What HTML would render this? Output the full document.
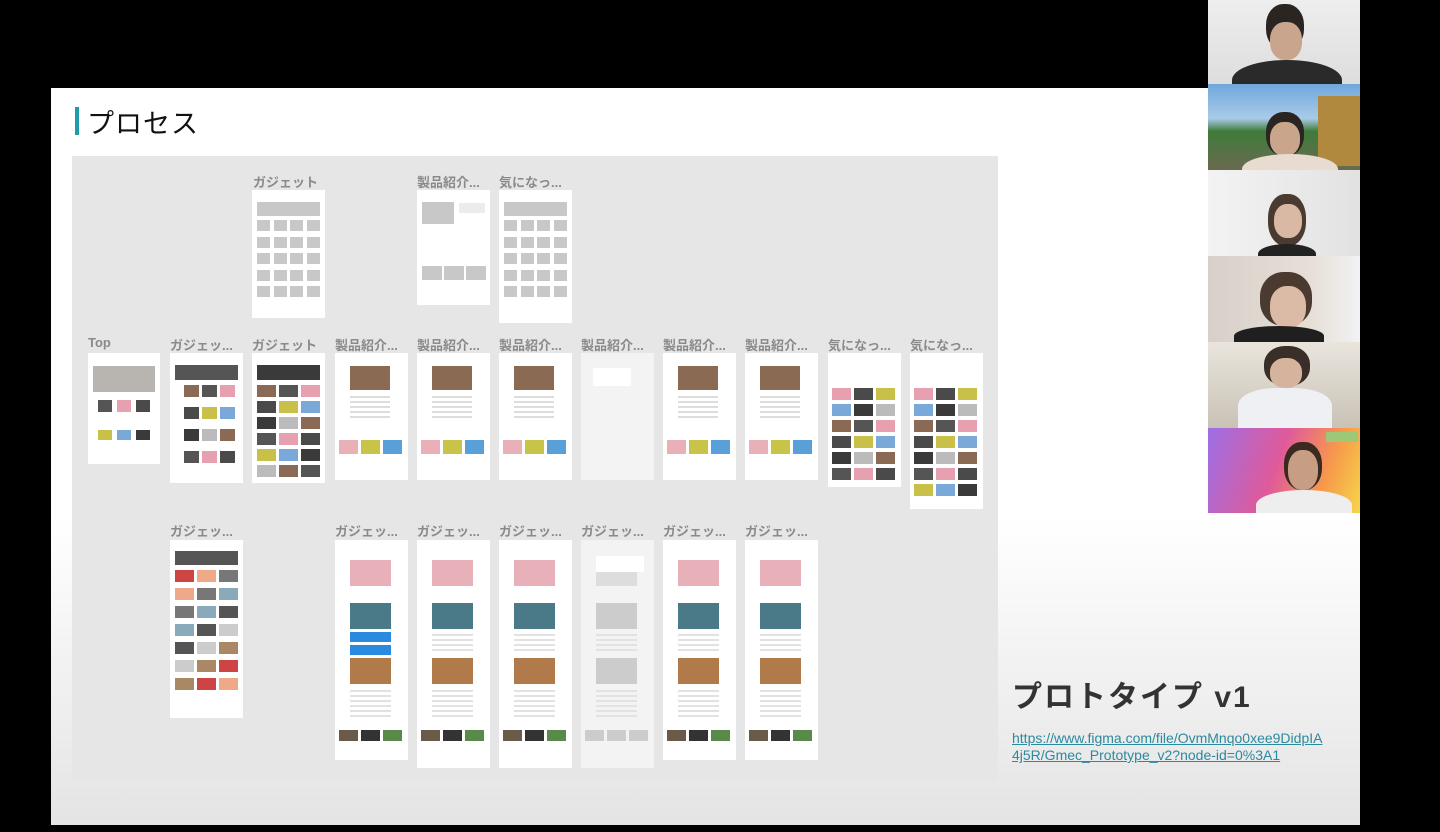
<!DOCTYPE html>
<html><head><meta charset="utf-8">
<style>
*{margin:0;padding:0;box-sizing:border-box}
body{width:1440px;height:832px;background:#000;position:relative;overflow:hidden;font-family:"Liberation Sans","Noto Sans CJK JP",sans-serif}
#slide{position:absolute;left:51px;top:88px;width:1309px;height:737px;background:linear-gradient(#fff 0px,#fff 430px,#e4e4e4 737px)}
#bar{position:absolute;left:75px;top:107px;width:4px;height:28px;background:#1f9bb0}
#title{position:absolute;left:87px;top:102px;font-size:27px;color:#111;letter-spacing:1px}
#canvas{position:absolute;left:72px;top:156px;width:926px;height:625px;background:#e6e6e6}
.lbl{position:absolute;font-size:13px;color:#8a8a8a;font-weight:bold;white-space:nowrap}
.fr{position:absolute;background:#fff;overflow:hidden}
.b{position:absolute}
.tile{position:absolute;left:1208px;width:152px;height:86px;overflow:hidden}
#pt{position:absolute;left:1012px;top:672px;font-size:30px;color:#333;letter-spacing:2px;font-weight:bold}
#link{position:absolute;left:1012px;top:730px;font-size:14px;line-height:17px;color:#2a8aa0;text-decoration:underline}
</style></head><body>
<div id="slide"></div>
<div id="bar"></div>
<div id="title">プロセス</div>
<div id="canvas"></div>
<div id="frames"></div>

<div class="tile" style="top:0;background:linear-gradient(#eee,#ddd)">
 <div class="b" style="left:58px;top:4px;width:38px;height:46px;border-radius:45%;background:#2b2522"></div>
 <div class="b" style="left:62px;top:22px;width:32px;height:38px;border-radius:45%;background:#caa58e"></div>
 <div class="b" style="left:24px;top:60px;width:110px;height:40px;border-radius:50% 50% 0 0;background:#2a2a2a"></div>
</div>
<div class="tile" style="top:84px;background:linear-gradient(#6fa7dc 0,#a9cbe8 40%,#3f7b3a 55%,#6a6a50 100%)">
 <div class="b" style="left:110px;top:12px;width:42px;height:70px;background:#b0893e"></div>
 <div class="b" style="left:58px;top:28px;width:38px;height:44px;border-radius:45%;background:#2b2522"></div>
 <div class="b" style="left:62px;top:38px;width:30px;height:34px;border-radius:45%;background:#c9a58c"></div>
 <div class="b" style="left:34px;top:70px;width:96px;height:30px;border-radius:50% 50% 0 0;background:#e8dcd0"></div>
</div>
<div class="tile" style="top:170px;background:linear-gradient(90deg,#f3f3f3,#e2e2e2)">
 <div class="b" style="left:60px;top:24px;width:38px;height:52px;border-radius:45%;background:#4a3a30"></div>
 <div class="b" style="left:66px;top:34px;width:28px;height:34px;border-radius:45%;background:#d9b8a4"></div>
 <div class="b" style="left:50px;top:74px;width:58px;height:20px;border-radius:50% 50% 0 0;background:#222"></div>
</div>
<div class="tile" style="top:256px;background:linear-gradient(90deg,#d8d0c8,#e6e0d8 70%,#f2f2f4)">
 <div class="b" style="left:52px;top:16px;width:52px;height:54px;border-radius:45%;background:#4a3a30"></div>
 <div class="b" style="left:62px;top:30px;width:36px;height:42px;border-radius:45%;background:#dcbba6"></div>
 <div class="b" style="left:26px;top:70px;width:90px;height:20px;border-radius:50% 50% 0 0;background:#1f1f1f"></div>
</div>
<div class="tile" style="top:342px;background:linear-gradient(#e9e4dc 0,#e0dbd2 30%,#c9c2b5 100%)">
 <div class="b" style="left:56px;top:4px;width:46px;height:40px;border-radius:45%;background:#3a2e28"></div>
 <div class="b" style="left:62px;top:16px;width:32px;height:30px;border-radius:45%;background:#d5b39c"></div>
 <div class="b" style="left:30px;top:46px;width:94px;height:44px;border-radius:40% 40% 0 0;background:#eef0f4"></div>
</div>
<div class="tile" style="top:428px;height:85px;background:linear-gradient(110deg,#9b6fe6 0,#e05a9a 45%,#f79a4a 75%,#f5d64a 100%)">
 <div class="b" style="left:118px;top:4px;width:32px;height:10px;background:#9ec878"></div>
 <div class="b" style="left:76px;top:14px;width:38px;height:48px;border-radius:45%;background:#3a2a20"></div>
 <div class="b" style="left:80px;top:22px;width:30px;height:40px;border-radius:45%;background:#c79e84"></div>
 <div class="b" style="left:48px;top:62px;width:96px;height:30px;border-radius:50% 50% 0 0;background:#eeeeee"></div>
</div>

<div id="pt">プロトタイプ v1</div>
<div id="link">https://www.figma.com/file/OvmMnqo0xee9DidpIA<br>4j5R/Gmec_Prototype_v2?node-id=0%3A1</div>

<script>
var F=document.getElementById('frames'),h='';
function lbl(x,y,t){h+='<div class="lbl" style="left:'+x+'px;top:'+y+'px">'+t+'</div>'}
function box(x,y,w,hh,c){h+='<div class="b" style="left:'+x+'px;top:'+y+'px;width:'+w+'px;height:'+hh+'px;background:'+c+'"></div>'}
function frame(x,y,w,hh,op){h+='<div class="fr" style="left:'+x+'px;top:'+y+'px;width:'+w+'px;height:'+hh+'px;opacity:'+(op||1)+'"></div>'}
function wire(x,y,w,hh){frame(x,y,w,hh);box(x+5,y+12,w-10,14,'#c8c8c8');for(var r=0;r<5;r++)for(var c=0;c<4;c++)box(x+5+c*16.5,y+30+r*16.5,13,11,'#c8c8c8');}
lbl(253,172,'ガジェット');wire(252,190,73,128);
lbl(417,172,'製品紹介...');frame(417,190,73,115);box(422,202,32,22,'#c8c8c8');box(459,203,26,10,'#ececec');for(var i=0;i<3;i++)box(422+i*22,266,20,14,'#c8c8c8');
lbl(499,172,'気になっ...');wire(499,190,73,133);
var cols=[[88,'Top',111],[170,'ガジェッ...',130],[252,'ガジェット',130],[335,'製品紹介...',127],[417,'製品紹介...',127],[499,'製品紹介...',127],[581,'製品紹介...',127],[663,'製品紹介...',127],[745,'製品紹介...',127],[828,'気になっ...',134],[910,'気になっ...',156]];
var pal=['#8a6a55','#555','#e6a0b0','#4a4a4a','#c9c04a','#7aa8d8','#3a3a3a','#bbb'];
cols.forEach(function(c,i){var x=c[0];lbl(x,335,c[1]);var op=(i==6)?0.5:1;frame(x,353,i==0?72:73,c[2],op);
 if(op<1){box(x+12,368,38,18,'#fff');return;}
 if(i==0){box(x+5,366,62,26,'#b8b4b0');for(var k=0;k<3;k++){box(x+10+k*19,400,14,12,pal[k+1]);box(x+10+k*19,430,14,10,pal[k+4]);}}
 else if(i<3){box(x+5,365,63,15,i==1?'#555':'#3a3a3a');for(var r=0;r<(i==1?4:6);r++)for(var k=0;k<3;k++)box(x+(i==1?14:5)+k*(i==1?18:22),385+r*(i==1?22:16),i==1?15:19,12,pal[(r*3+k)%8]);}
 else if(i<9){box(x+15,366,40,24,'#8a6a52');for(var l=0;l<5;l++)box(x+15,396+l*5,40,2,'#ddd');for(var k=0;k<3;k++)box(x+4+k*22,440,19,14,['#eab0b8','#c8c44a','#5aa0d8'][k]);}
 else{for(var r=0;r<(i==9?6:7);r++)for(var k=0;k<3;k++)box(x+4+k*22,388+r*16,19,12,pal[(r*3+k+2)%8]);}
});
lbl(170,521,'ガジェッ...');frame(170,540,73,178);box(175,551,63,14,'#555');for(var r=0;r<7;r++)for(var k=0;k<3;k++)box(175+k*22,570+r*18,19,12,['#c44','#ea8','#777','#8ab','#555','#ccc','#a86'][(r+k)%7]);
[[335,220],[417,228],[499,228],[581,228],[663,220],[745,220]].forEach(function(c,i){var x=c[0],op=i==3?0.5:1;lbl(x,521,'ガジェッ...');frame(x,540,73,c[1],op);
 box(x+15,560,41,26,i==3?'#ddd':'#e8b0b8');box(x+15,603,41,26,i==3?'#ccc':'#4a7a88');
 if(i==0){box(x+15,632,41,10,'#2a8ae0');box(x+15,645,41,10,'#2a8ae0');}
 else{for(var l=0;l<4;l++)box(x+15,634+l*5,41,2,'#e2e2e2');}
 box(x+15,658,41,26,i==3?'#ccc':'#b07a4a');
 for(var l=0;l<6;l++)box(x+15,690+l*5,41,2,'#e2e2e2');
 for(var k=0;k<3;k++)box(x+4+k*22,730,19,11,i==3?'#ccc':['#6a5a4a','#333','#5a8a4a'][k]);
 if(i==3)box(x+15,556,48,16,'#fff');
});
F.innerHTML=h;
</script>
</body></html>
